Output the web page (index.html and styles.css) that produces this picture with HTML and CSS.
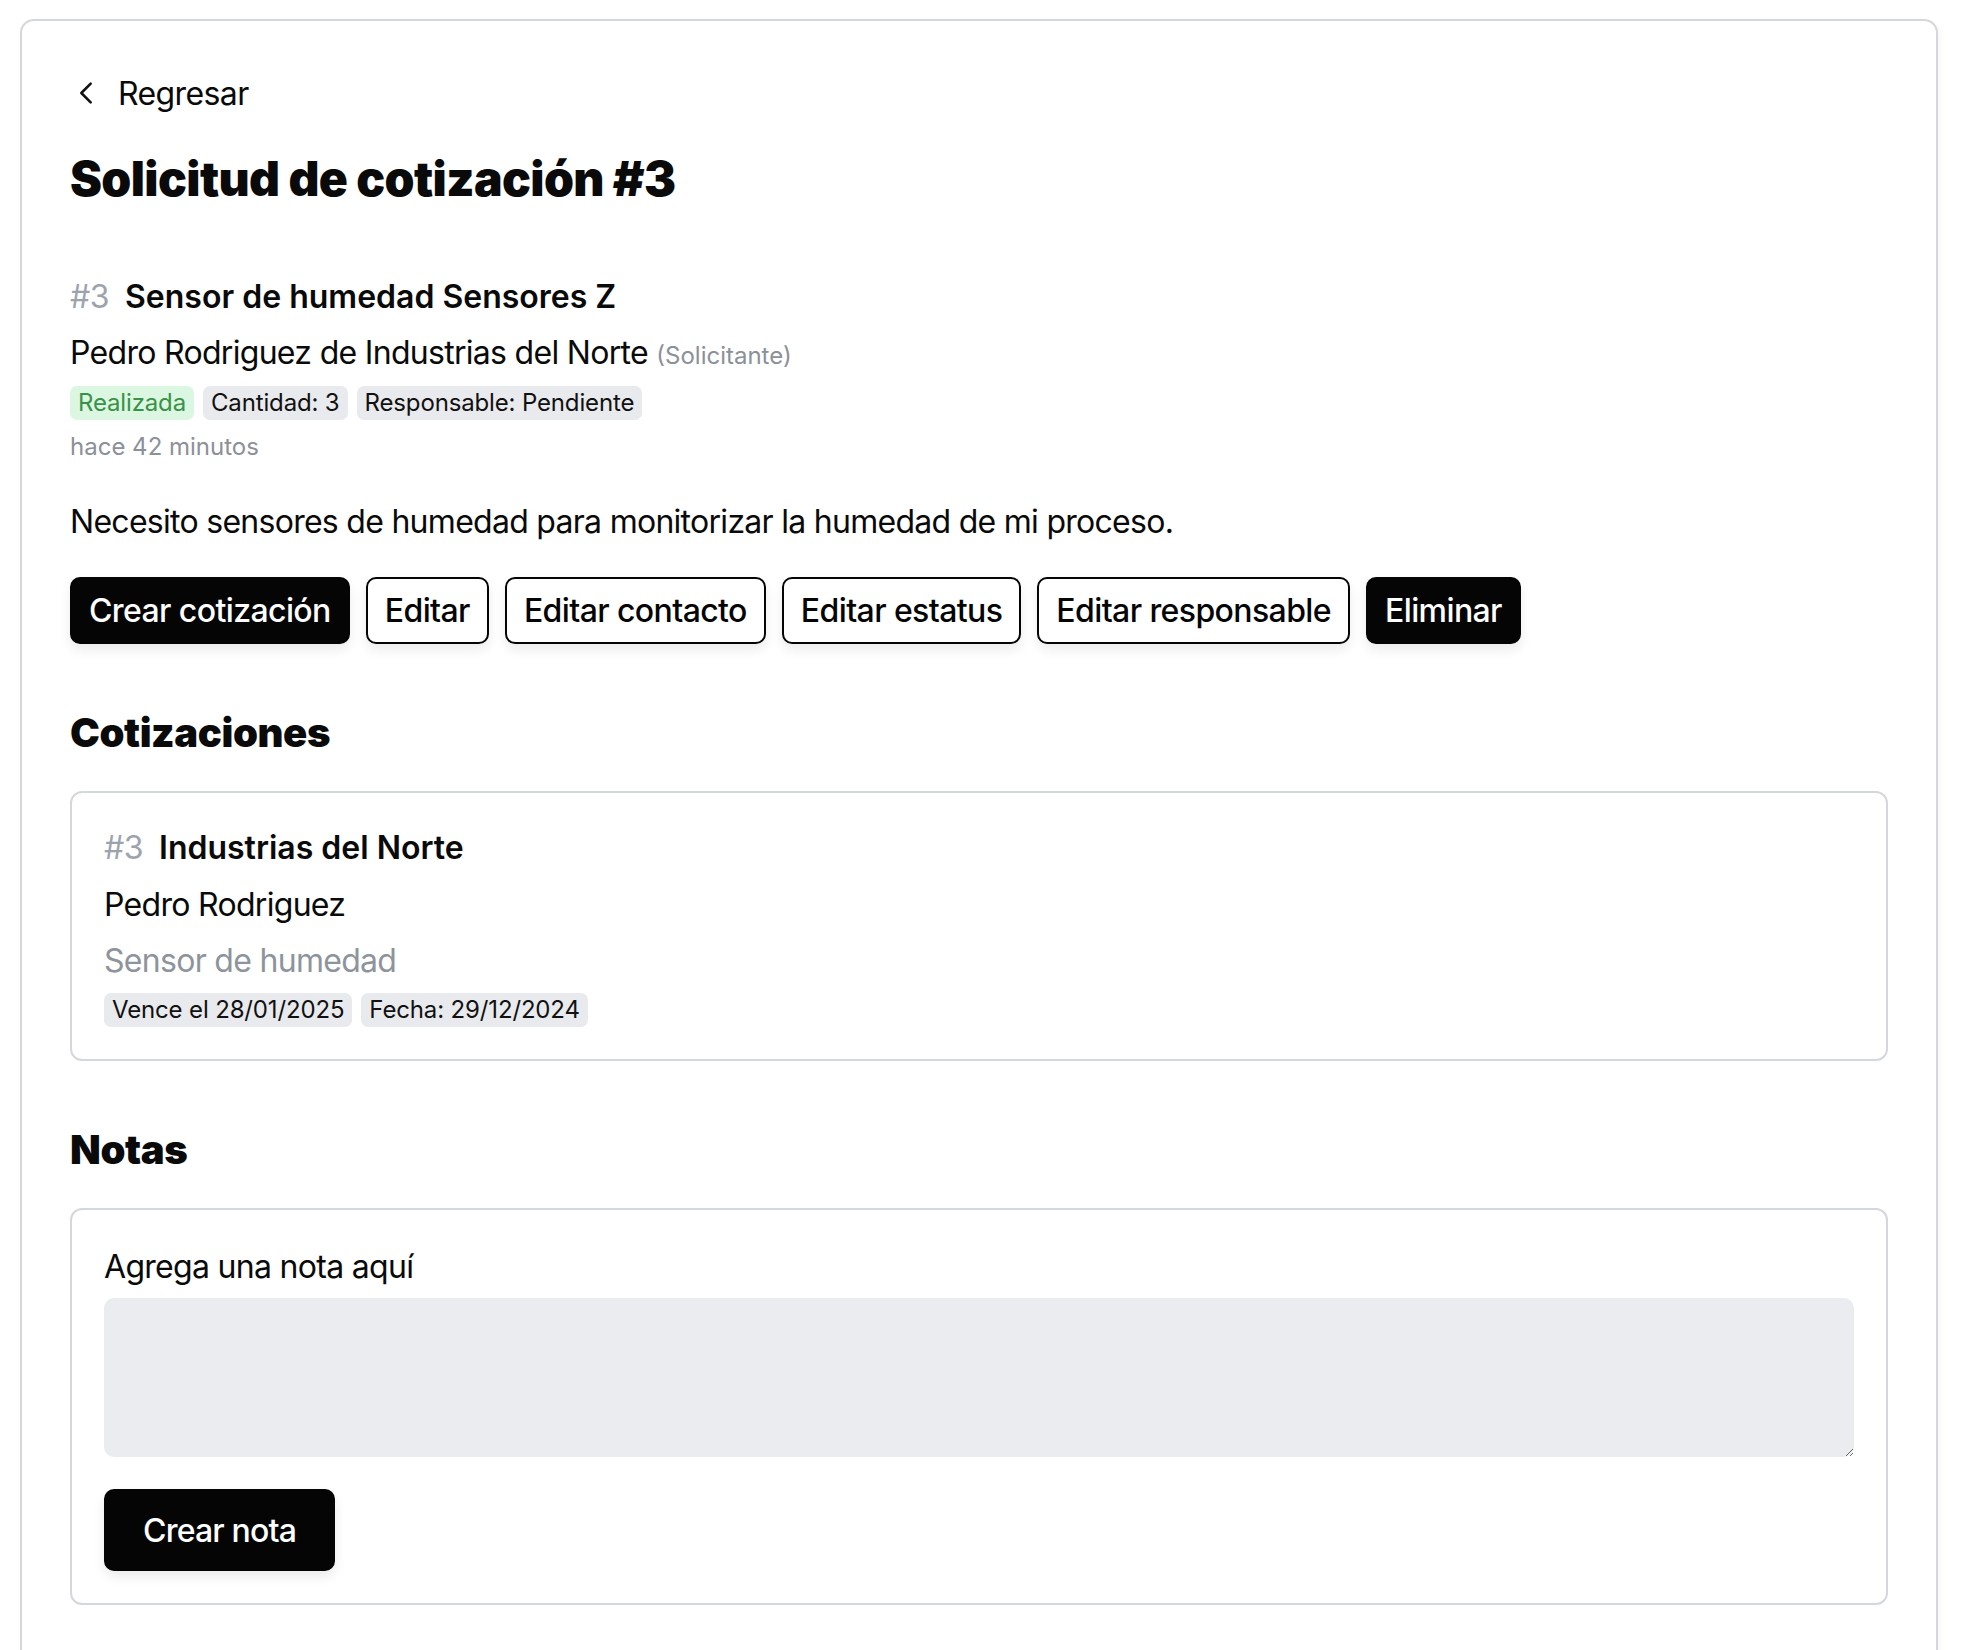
FILE: index.html
```html
<!DOCTYPE html>
<html lang="es">
<head>
<meta charset="utf-8">
<title>Solicitud de cotización #3</title>
<link rel="stylesheet" href="styles.css">
</head>
<body>
<main class="page">
  <a class="back" href="#">
    <svg class="back-icon" viewBox="0 0 24 24" width="28" height="28" aria-hidden="true"><path d="M16 4l-8 8 8 8" fill="none" stroke="#111" stroke-width="2.2" stroke-linecap="round" stroke-linejoin="round"/></svg>
    <span>Regresar</span>
  </a>
  <h1 class="h1">Solicitud de cotización #3</h1>

  <div class="title-row"><span class="num">#3</span><span class="title">Sensor de humedad Sensores Z</span></div>
  <div class="contact">Pedro Rodriguez de Industrias del Norte <span class="role">(Solicitante)</span></div>
  <div class="badges">
    <span class="badge badge-green">Realizada</span>
    <span class="badge">Cantidad: 3</span>
    <span class="badge">Responsable: Pendiente</span>
  </div>
  <div class="time">hace 42 minutos</div>
  <p class="desc">Necesito sensores de humedad para monitorizar la humedad de mi proceso.</p>

  <div class="actions">
    <button class="btn btn-dark">Crear cotización</button>
    <button class="btn btn-outline">Editar</button>
    <button class="btn btn-outline">Editar contacto</button>
    <button class="btn btn-outline">Editar estatus</button>
    <button class="btn btn-outline">Editar responsable</button>
    <button class="btn btn-dark">Eliminar</button>
  </div>

  <h2 class="h2 h2-first">Cotizaciones</h2>
  <section class="card quote">
    <div class="title-row card-title"><span class="num">#3</span><span class="title">Industrias del Norte</span></div>
    <div class="quote-line">Pedro Rodriguez</div>
    <div class="quote-line muted">Sensor de humedad</div>
    <div class="badges">
      <span class="badge">Vence el 28/01/2025</span>
      <span class="badge">Fecha: 29/12/2024</span>
    </div>
  </section>

  <h2 class="h2">Notas</h2>
  <section class="card notes">
    <label class="note-label" for="nota">Agrega una nota aquí</label>
    <textarea id="nota" class="note-input"></textarea>
    <button class="btn btn-dark btn-big">Crear nota</button>
  </section>
</main>
</body>
</html>
```

FILE: styles.css
```css
* { box-sizing: border-box; }
html, body { margin: 0; padding: 0; background: #fff; }
body {
  font-family: Inter, "Noto Sans", sans-serif;
  color: #0a0a0a;
}
.page {
  width: 1918px;
  margin: 19px 0 0 20px;
  border: 2px solid #d4d7dc;
  border-radius: 14px;
  padding: 48px 48px 60px;
  box-shadow: 2px 2px 6px rgba(0,0,0,0.04);
  min-height: 1700px;
}
.back {
  display: flex;
  align-items: center;
  height: 48px;
  gap: 18px;
  padding-left: 2px;
  color: #0a0a0a;
  text-decoration: none;
  font-size: 32px;
  letter-spacing: -0.6px;
}
.back-icon { display: block; }
.h1 {
  margin: 32px 0 0;
  font-size: 48px;
  line-height: 60px;
  font-weight: 900;
  letter-spacing: -0.6px;
}
.title-row {
  display: flex;
  align-items: baseline;
  gap: 16px;
  margin-top: 64px;
  line-height: 48px;
  font-size: 32px;
}
.num { color: #9ca3af; font-weight: 400; letter-spacing: -0.5px; }
.title { font-weight: 600; }
.contact {
  margin-top: 8px;
  font-size: 32px;
  line-height: 48px;
  letter-spacing: -0.7px;
}
.role { font-size: 24px; color: #8b9099; letter-spacing: 0; }
.badges {
  display: flex;
  gap: 9px;
  margin-top: 6px;
}
.badge {
  display: inline-block;
  height: 34px;
  line-height: 34px;
  padding: 0 8px;
  border-radius: 7px;
  background: #e9eaed;
  font-size: 24px;
  letter-spacing: -0.15px;
  color: #111;
}
.badge-green { background: #dcf7e1; color: #3a9248; }
.time {
  margin-top: 7px;
  font-size: 24px;
  line-height: 40px;
  color: #8b9099;
}
.desc {
  margin: 31px 0 0;
  font-size: 32px;
  line-height: 48px;
  letter-spacing: -0.72px;
}
.actions {
  display: flex;
  gap: 16px;
  margin-top: 31px;
}
.btn {
  font-family: inherit;
  font-size: 32px;
  font-weight: 500;
  letter-spacing: -0.6px;
  height: 67px;
  padding: 0 17px;
  border-radius: 10px;
  border: 2px solid #050505;
  cursor: pointer;
  box-shadow: 0 6px 12px rgba(0,0,0,0.08);
}
.btn-dark { background: #050505; color: #fff; }
.btn-outline { background: #fff; color: #050505; }
.h2 {
  margin: 61px 0 0;
  font-size: 40px;
  line-height: 56px;
  font-weight: 900;
  letter-spacing: -0.4px;
}
.h2-first { margin-top: 61px; }
.card {
  margin-top: 30px;
  border: 2px solid #d4d7dc;
  border-radius: 12px;
  padding: 32px;
}
.card-title { margin-top: 0; line-height: 46px; }
.quote .quote-line {
  margin-top: 10px;
  font-size: 32px;
  line-height: 48px;
  letter-spacing: -0.7px;
}
.quote .muted { margin-top: 8px; color: #8e949c; }
.quote .badges { margin-top: 8px; }
.notes { padding-top: 33px; }
.note-label {
  display: block;
  font-size: 32px;
  line-height: 48px;
  letter-spacing: -0.7px;
}
.note-input {
  display: block;
  width: 100%;
  height: 159px;
  margin-top: 7px;
  border: none;
  border-radius: 10px;
  background: #ebecef;
  font-family: inherit;
  font-size: 32px;
  outline: none;
}
.btn-big {
  display: block;
  margin-top: 32px;
  height: 82px;
  padding: 0 37px;
  letter-spacing: -0.8px;
}
```
